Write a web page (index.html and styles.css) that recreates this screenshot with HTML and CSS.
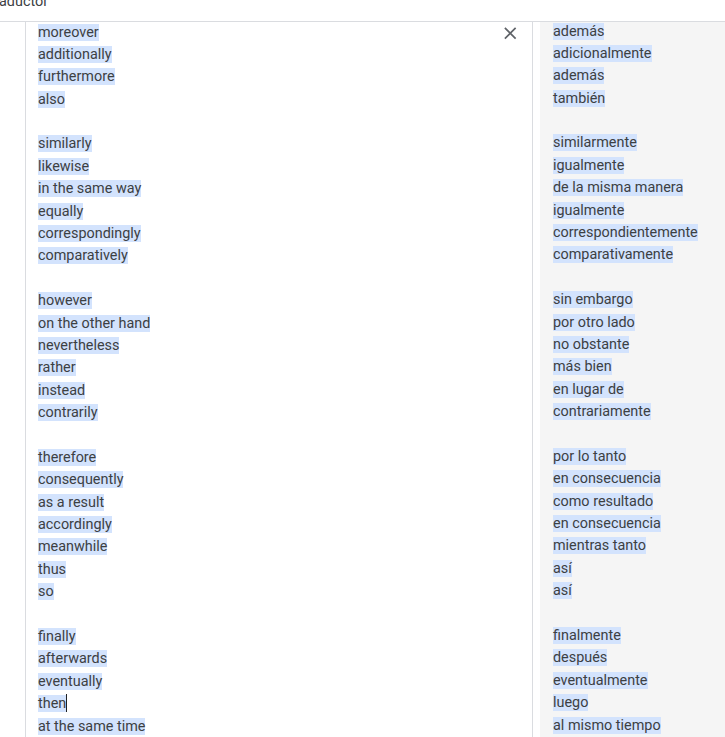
FILE: index.html
```html
<!DOCTYPE html>
<html lang="es">
<head>
<meta charset="utf-8">
<title>Traductor</title>
<link rel="stylesheet" href="styles.css">
</head>
<body>
<div class="top"><span class="top-text">aductor</span></div>
<div class="main">
  <div class="gutter"></div>
  <div class="source">
    <div class="lines src-lines">
      <div class="ln"><span class="sel">moreover</span></div>
      <div class="ln"><span class="sel">additionally</span></div>
      <div class="ln"><span class="sel">furthermore</span></div>
      <div class="ln"><span class="sel">also</span></div>
      <div class="ln"></div>
      <div class="ln"><span class="sel">similarly</span></div>
      <div class="ln"><span class="sel">likewise</span></div>
      <div class="ln"><span class="sel">in the same way</span></div>
      <div class="ln"><span class="sel">equally</span></div>
      <div class="ln"><span class="sel">correspondingly</span></div>
      <div class="ln"><span class="sel">comparatively</span></div>
      <div class="ln"></div>
      <div class="ln"><span class="sel">however</span></div>
      <div class="ln"><span class="sel">on the other hand</span></div>
      <div class="ln"><span class="sel">nevertheless</span></div>
      <div class="ln"><span class="sel">rather</span></div>
      <div class="ln"><span class="sel">instead</span></div>
      <div class="ln"><span class="sel">contrarily</span></div>
      <div class="ln"></div>
      <div class="ln"><span class="sel">therefore</span></div>
      <div class="ln"><span class="sel">consequently</span></div>
      <div class="ln"><span class="sel">as a result</span></div>
      <div class="ln"><span class="sel">accordingly</span></div>
      <div class="ln"><span class="sel">meanwhile</span></div>
      <div class="ln"><span class="sel">thus</span></div>
      <div class="ln"><span class="sel">so</span></div>
      <div class="ln"></div>
      <div class="ln"><span class="sel">finally</span></div>
      <div class="ln"><span class="sel">afterwards</span></div>
      <div class="ln"><span class="sel">eventually</span></div>
      <div class="ln"><span class="sel">then</span><span class="caret"></span></div>
      <div class="ln"><span class="sel">at the same time</span></div>
    </div>
    <button class="clear" aria-label="Borrar texto de origen">
      <svg viewBox="0 0 24 24" width="20.5" height="20.5"><path d="M19 6.41L17.59 5 12 10.59 6.41 5 5 6.41 10.59 12 5 17.59 6.41 19 12 13.41 17.59 19 19 17.59 13.41 12z" fill="#5f6368"/></svg>
    </button>
  </div>
  <div class="spacer"></div>
  <div class="target">
    <div class="lines tgt-lines">
      <div class="ln"><span class="sel">además</span></div>
      <div class="ln"><span class="sel">adicionalmente</span></div>
      <div class="ln"><span class="sel">además</span></div>
      <div class="ln"><span class="sel">también</span></div>
      <div class="ln"></div>
      <div class="ln"><span class="sel">similarmente</span></div>
      <div class="ln"><span class="sel">igualmente</span></div>
      <div class="ln"><span class="sel">de la misma manera</span></div>
      <div class="ln"><span class="sel">igualmente</span></div>
      <div class="ln"><span class="sel">correspondientemente</span></div>
      <div class="ln"><span class="sel">comparativamente</span></div>
      <div class="ln"></div>
      <div class="ln"><span class="sel">sin embargo</span></div>
      <div class="ln"><span class="sel">por otro lado</span></div>
      <div class="ln"><span class="sel">no obstante</span></div>
      <div class="ln"><span class="sel">más bien</span></div>
      <div class="ln"><span class="sel">en lugar de</span></div>
      <div class="ln"><span class="sel">contrariamente</span></div>
      <div class="ln"></div>
      <div class="ln"><span class="sel">por lo tanto</span></div>
      <div class="ln"><span class="sel">en consecuencia</span></div>
      <div class="ln"><span class="sel">como resultado</span></div>
      <div class="ln"><span class="sel">en consecuencia</span></div>
      <div class="ln"><span class="sel">mientras tanto</span></div>
      <div class="ln"><span class="sel">así</span></div>
      <div class="ln"><span class="sel">así</span></div>
      <div class="ln"></div>
      <div class="ln"><span class="sel">finalmente</span></div>
      <div class="ln"><span class="sel">después</span></div>
      <div class="ln"><span class="sel">eventualmente</span></div>
      <div class="ln"><span class="sel">luego</span></div>
      <div class="ln"><span class="sel">al mismo tiempo</span></div>
    </div>
  </div>
</div>
</body>
</html>
```
FILE: styles.css
```css
html, body {
  margin: 0;
  padding: 0;
  background: #ffffff;
  overflow: hidden;
}
body {
  font-family: Roboto, "Noto Sans", Arial, sans-serif;
  color: #3c4043;
  width: 725px;
  height: 737px;
}
.top {
  height: 21px;
  border-bottom: 1px solid #dadce0;
  overflow: hidden;
}
.top-text {
  display: block;
  font-size: 14.4px;
  line-height: 14px;
  margin-top: -5px;
  margin-left: -1px;
  color: #3c4043;
}
.main {
  display: flex;
  height: 715px;
  overflow: hidden;
}
.gutter {
  width: 25px;
  flex: none;
}
.source {
  flex: none;
  width: 494px;
  border-left: 1px solid #dadce0;
  border-right: 1px solid #dadce0;
  padding-left: 12px;
  display: flex;
  justify-content: space-between;
  align-items: flex-start;
}
.spacer {
  width: 7px;
  flex: none;
}
.target {
  flex: 1;
  background: #f5f5f5;
  padding-left: 13px;
}
.lines {
  font-size: 14.4px;
  line-height: 22.4px;
  white-space: nowrap;
}
.src-lines {
  margin-top: -0.5px;
}
.tgt-lines {
  margin-top: -1.5px;
}
.ln {
  height: 22.4px;
}
.sel {
  background: #d3e3fd;
}
.caret {
  display: inline-block;
  width: 1px;
  height: 18px;
  background: #202124;
  vertical-align: -4px;
}
.clear {
  border: 0;
  background: transparent;
  padding: 0;
  margin: 1px 12px 0 0;
  width: 20.5px;
  height: 20.5px;
  display: flex;
  align-items: center;
  justify-content: center;
}
.clear svg {
  display: block;
}
```
